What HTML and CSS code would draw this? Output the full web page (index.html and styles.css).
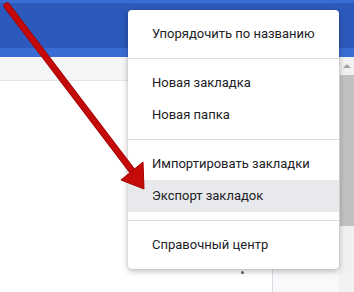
FILE: index.html
```html
<!DOCTYPE html>
<html lang="ru">
<head>
  <meta charset="UTF-8">
  <meta name="viewport" content="width=device-width,initial-scale=1">
  <title>Закладки</title>
  <link rel="stylesheet" href="styles.css">
</head>
<body>
  <div class="page">
    <header class="topbar">
      <div class="topbar-inner"></div>
    </header>
    <div class="workspace">
      <div class="content">
        <div class="toolbar"></div>
        <div class="panes">
          <div class="list">
            <span class="more-vert"><i></i><i></i><i></i></span>
          </div>
          <div class="side"></div>
        </div>
      </div>
      <div class="scrollbar">
        <span class="scroll-up"></span>
        <span class="scroll-thumb"></span>
      </div>
    </div>

    <!-- dropdown menu -->
    <ul class="menu">
      <li class="menu-item">Упорядочить по названию</li>
      <li class="menu-sep"></li>
      <li class="menu-item">Новая закладка</li>
      <li class="menu-item">Новая папка</li>
      <li class="menu-sep"></li>
      <li class="menu-item">Импортировать закладки</li>
      <li class="menu-item active">Экспорт закладок</li>
      <li class="menu-sep"></li>
      <li class="menu-item">Справочный центр</li>
    </ul>

    <!-- red pointer arrow -->
    <svg class="pointer" width="354" height="292" viewBox="0 0 354 292">
      <line x1="7" y1="6" x2="133" y2="172" stroke="#a80000" stroke-width="7" stroke-linecap="round"/>
      <line x1="7" y1="6" x2="133" y2="172" stroke="#c50a0a" stroke-width="5" stroke-linecap="round"/>
      <polygon points="144,189 143,162 121,180" fill="#c50a0a" stroke="#a80000" stroke-width="1" stroke-linejoin="round"/>
    </svg>
  </div>
</body>
</html>
```

FILE: styles.css
```css
* { box-sizing: border-box; }
html, body { margin: 0; padding: 0; }
body { background: #fff; font-family: Roboto, "Noto Sans", sans-serif; color: #202124; }

.page { position: relative; width: 354px; height: 292px; overflow: hidden; display: flex; flex-direction: column; }

.topbar { height: 57px; background: #3a6cd4; padding: 3px 0 9px; }
.topbar-inner { height: 100%; background: #2c59bb; }

.workspace { flex: 1; display: flex; }
.content { flex: 1; display: flex; flex-direction: column; }
.toolbar { height: 24px; background: #f5f6f8; border-bottom: 1px solid #e3e4e6; }
.panes { flex: 1; display: flex; }
.list { flex: 1; position: relative; background: #fff; }
.side { width: 67px; background: #f8f9fa; border-left: 1px solid #dcdde0; }

.more-vert { position: absolute; left: 241px; top: 176px; display: flex; flex-direction: column; gap: 4px; }
.more-vert i { width: 3px; height: 3px; border-radius: 50%; background: #5f6368; }

.scrollbar { width: 15px; background: #f1f1f1; display: flex; flex-direction: column; align-items: center; padding-top: 7px; }
.scroll-up { width: 0; height: 0; border-left: 4px solid transparent; border-right: 4px solid transparent; border-bottom: 4px solid #a3a3a3; }
.scroll-thumb { width: 14px; height: 151px; margin-top: 7px; background: #c1c1c1; }

.menu {
  position: absolute;
  left: 128px;
  top: 10px;
  width: 211px;
  margin: 0;
  padding: 8px 0;
  list-style: none;
  background: #fff;
  border-radius: 4px;
  box-shadow: 0 2px 6px rgba(0,0,0,0.28), 0 0 1px rgba(0,0,0,0.2);
}
.menu-item { height: 32px; line-height: 32px; padding-left: 24px; font-size: 13px; color: #202124; white-space: nowrap; }
.menu-item.active { background: #e8e9ed; }
.menu-sep { height: 1px; margin: 8px 0; background: #dadce0; }

.pointer { position: absolute; left: 0; top: 0; pointer-events: none; }
```
